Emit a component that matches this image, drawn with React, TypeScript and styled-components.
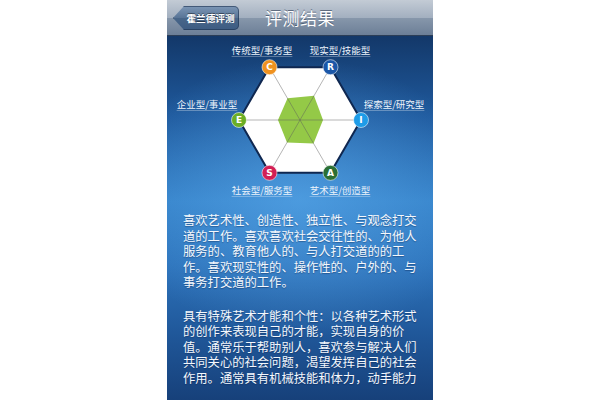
import React from 'react';
import styled, { createGlobalStyle } from 'styled-components';

const GlobalStyle = createGlobalStyle`
    html, body {
        margin: 0;
        padding: 0;
        background: #fff;
    }
    body {
        font-family: "Noto Sans CJK SC", "Noto Sans", sans-serif;
    }
`;

const CENTER = { x: 133, y: 84 };
const R = 61;

interface Node {
    key: string;
    color: string;
    angle: number;
    value: number;
    label: string;
    lx: number;
    ly: number;
}

const nodes: Node[] = [
    { key: 'R', color: '#1b57a8', angle: -60, value: 28, label: '现实型/技能型', lx: 173, ly: 14 },
    { key: 'I', color: '#1e9ce8', angle: 0, value: 23, label: '探索型/研究型', lx: 227, ly: 68 },
    { key: 'A', color: '#2b6f34', angle: 60, value: 27, label: '艺术型/创造型', lx: 173, ly: 154 },
    { key: 'S', color: '#d21f55', angle: 120, value: 26, label: '社会型/服务型', lx: 95, ly: 154 },
    { key: 'E', color: '#6bae25', angle: 180, value: 22, label: '企业型/事业型', lx: 40, ly: 68 },
    { key: 'C', color: '#f0921f', angle: 240, value: 25, label: '传统型/事务型', lx: 95, ly: 14 },
];

const point = (angle: number, r: number) => {
    const rad = (angle * Math.PI) / 180;
    return { x: CENTER.x + r * Math.cos(rad), y: CENTER.y + r * Math.sin(rad) };
};

const toPoints = (list: { x: number; y: number }[]) => list.map(p => `${p.x.toFixed(1)},${p.y.toFixed(1)}`).join(' ');

const HexChart = () => {
    const outer = nodes.map(n => point(n.angle, R));
    const inner = nodes.map(n => point(n.angle, n.value));

    return <ChartBox>
        <svg width="266" height="170" viewBox="0 0 266 170">
            <polygon points={toPoints(outer)} fill="#fff" stroke="#0f2750" strokeWidth="2" strokeLinejoin="round" />
            <polygon points={toPoints(inner)} fill="#94c947" />
            {
                [0, 1, 2].map(i => {
                    const a = outer[i];
                    const b = outer[i + 3];
                    return <line key={i} x1={a.x} y1={a.y} x2={b.x} y2={b.y} stroke="rgba(90,90,90,0.45)" strokeWidth="1" />;
                })
            }
            {
                nodes.map((n, i) => <g key={n.key}>
                    <circle cx={outer[i].x} cy={outer[i].y} r="7.5" fill={n.color} stroke="rgba(255,255,255,0.55)" strokeWidth="1" />
                    <NodeLetter x={outer[i].x} y={outer[i].y + 3.3} textAnchor="middle">{n.key}</NodeLetter>
                </g>)
            }
        </svg>
        {
            nodes.map(n => <AxisLabel key={n.key} $x={n.lx} $y={n.ly}>{n.label}</AxisLabel>)
        }
    </ChartBox>;
};

export default function App() {
    return <Page>
        <GlobalStyle />
        <Screen>
            <NavBar>
                <BackButton>霍兰德评测</BackButton>
                <NavTitle>评测结果</NavTitle>
            </NavBar>
            <Content>
                <HexChart />
                <TextArea>
                    <Paragraph>喜欢艺术性、创造性、独立性、与观念打交道的工作。喜欢喜欢社会交往性的、为他人服务的、教育他人的、与人打交道的的工作。喜欢现实性的、操作性的、户外的、与事务打交道的工作。</Paragraph>
                    <Paragraph>具有特殊艺术才能和个性：以各种艺术形式的创作来表现自己的才能，实现自身的价值。通常乐于帮助别人，喜欢参与解决人们共同关心的社会问题，渴望发挥自己的社会作用。通常具有机械技能和体力，动手能力</Paragraph>
                </TextArea>
            </Content>
        </Screen>
    </Page>;
}

const Page = styled.div`
    display: flex;
    justify-content: center;
    height: 400px;
    overflow: hidden;
`;

const Screen = styled.div`
    width: 266px;
    height: 400px;
    display: flex;
    flex-direction: column;
    overflow: hidden;
`;

const NavBar = styled.div`
    position: relative;
    height: 36px;
    flex-shrink: 0;
    display: flex;
    align-items: center;
    justify-content: center;
    background: linear-gradient(#c3cbd5 0%, #a3b0c0 50%, #8797ab 51%, #6c7f97 100%);
    border-bottom: 1px solid #2b3e57;
    box-sizing: border-box;
`;

const BackButton = styled.div`
    position: absolute;
    left: 6px;
    top: 6px;
    height: 24px;
    width: 66px;
    box-sizing: border-box;
    padding-left: 9px;
    display: flex;
    align-items: center;
    justify-content: center;
    color: #fff;
    font-size: 9.6px;
    font-weight: 700;
    background: linear-gradient(#7d97b6 0%, #587496 50%, #486689 51%, #3d5c83 100%);
    border-radius: 0 5px 5px 0;
    clip-path: polygon(0 50%, 11px 0, 100% 0, 100% 100%, 11px 100%);
    text-shadow: 0 -1px 0 rgba(0, 0, 0, 0.45);
    box-shadow: inset 0 0 0 1px rgba(30, 50, 80, 0.6);
`;

const NavTitle = styled.div`
    color: #fff;
    font-size: 17px;
    font-weight: 400;
    letter-spacing: 0.5px;
    text-shadow: 0 -1px 0 rgba(40, 55, 80, 0.6);
`;

const Content = styled.div`
    flex: 1;
    display: flex;
    flex-direction: column;
    background:
        radial-gradient(ellipse 70% 38% at 50% 44%, rgba(95, 175, 240, 0.55), rgba(95, 175, 240, 0) 100%),
        linear-gradient(#133869 0%, #1f5a9e 22%, #3582c9 45%, #2d73bb 62%, #1f5698 82%, #163f78 100%);
`;

const ChartBox = styled.div`
    position: relative;
    height: 170px;
    flex-shrink: 0;
    svg {
        display: block;
    }
`;

const NodeLetter = styled.text`
    fill: #fff;
    font-family: "DejaVu Sans", "Liberation Sans", sans-serif;
    font-size: 9px;
    font-weight: 700;
`;

const AxisLabel = styled.span<{ $x: number; $y: number }>`
    position: absolute;
    left: ${p => p.$x}px;
    top: ${p => p.$y}px;
    transform: translate(-50%, -50%);
    white-space: nowrap;
    color: #eef4fb;
    font-size: 9.5px;
    line-height: 12px;
    text-decoration: underline;
    text-decoration-color: rgba(255, 255, 255, 0.3);
    text-underline-offset: 2px;
`;

const TextArea = styled.div`
    margin-top: 7px;
    padding: 0 13px 0 16px;
`;

const Paragraph = styled.p`
    margin: 0 0 18px 0;
    color: #f4f8fd;
    font-size: 12.3px;
    line-height: 15.5px;
    text-shadow: 0 1px 1px rgba(0, 20, 60, 0.35);
`;
